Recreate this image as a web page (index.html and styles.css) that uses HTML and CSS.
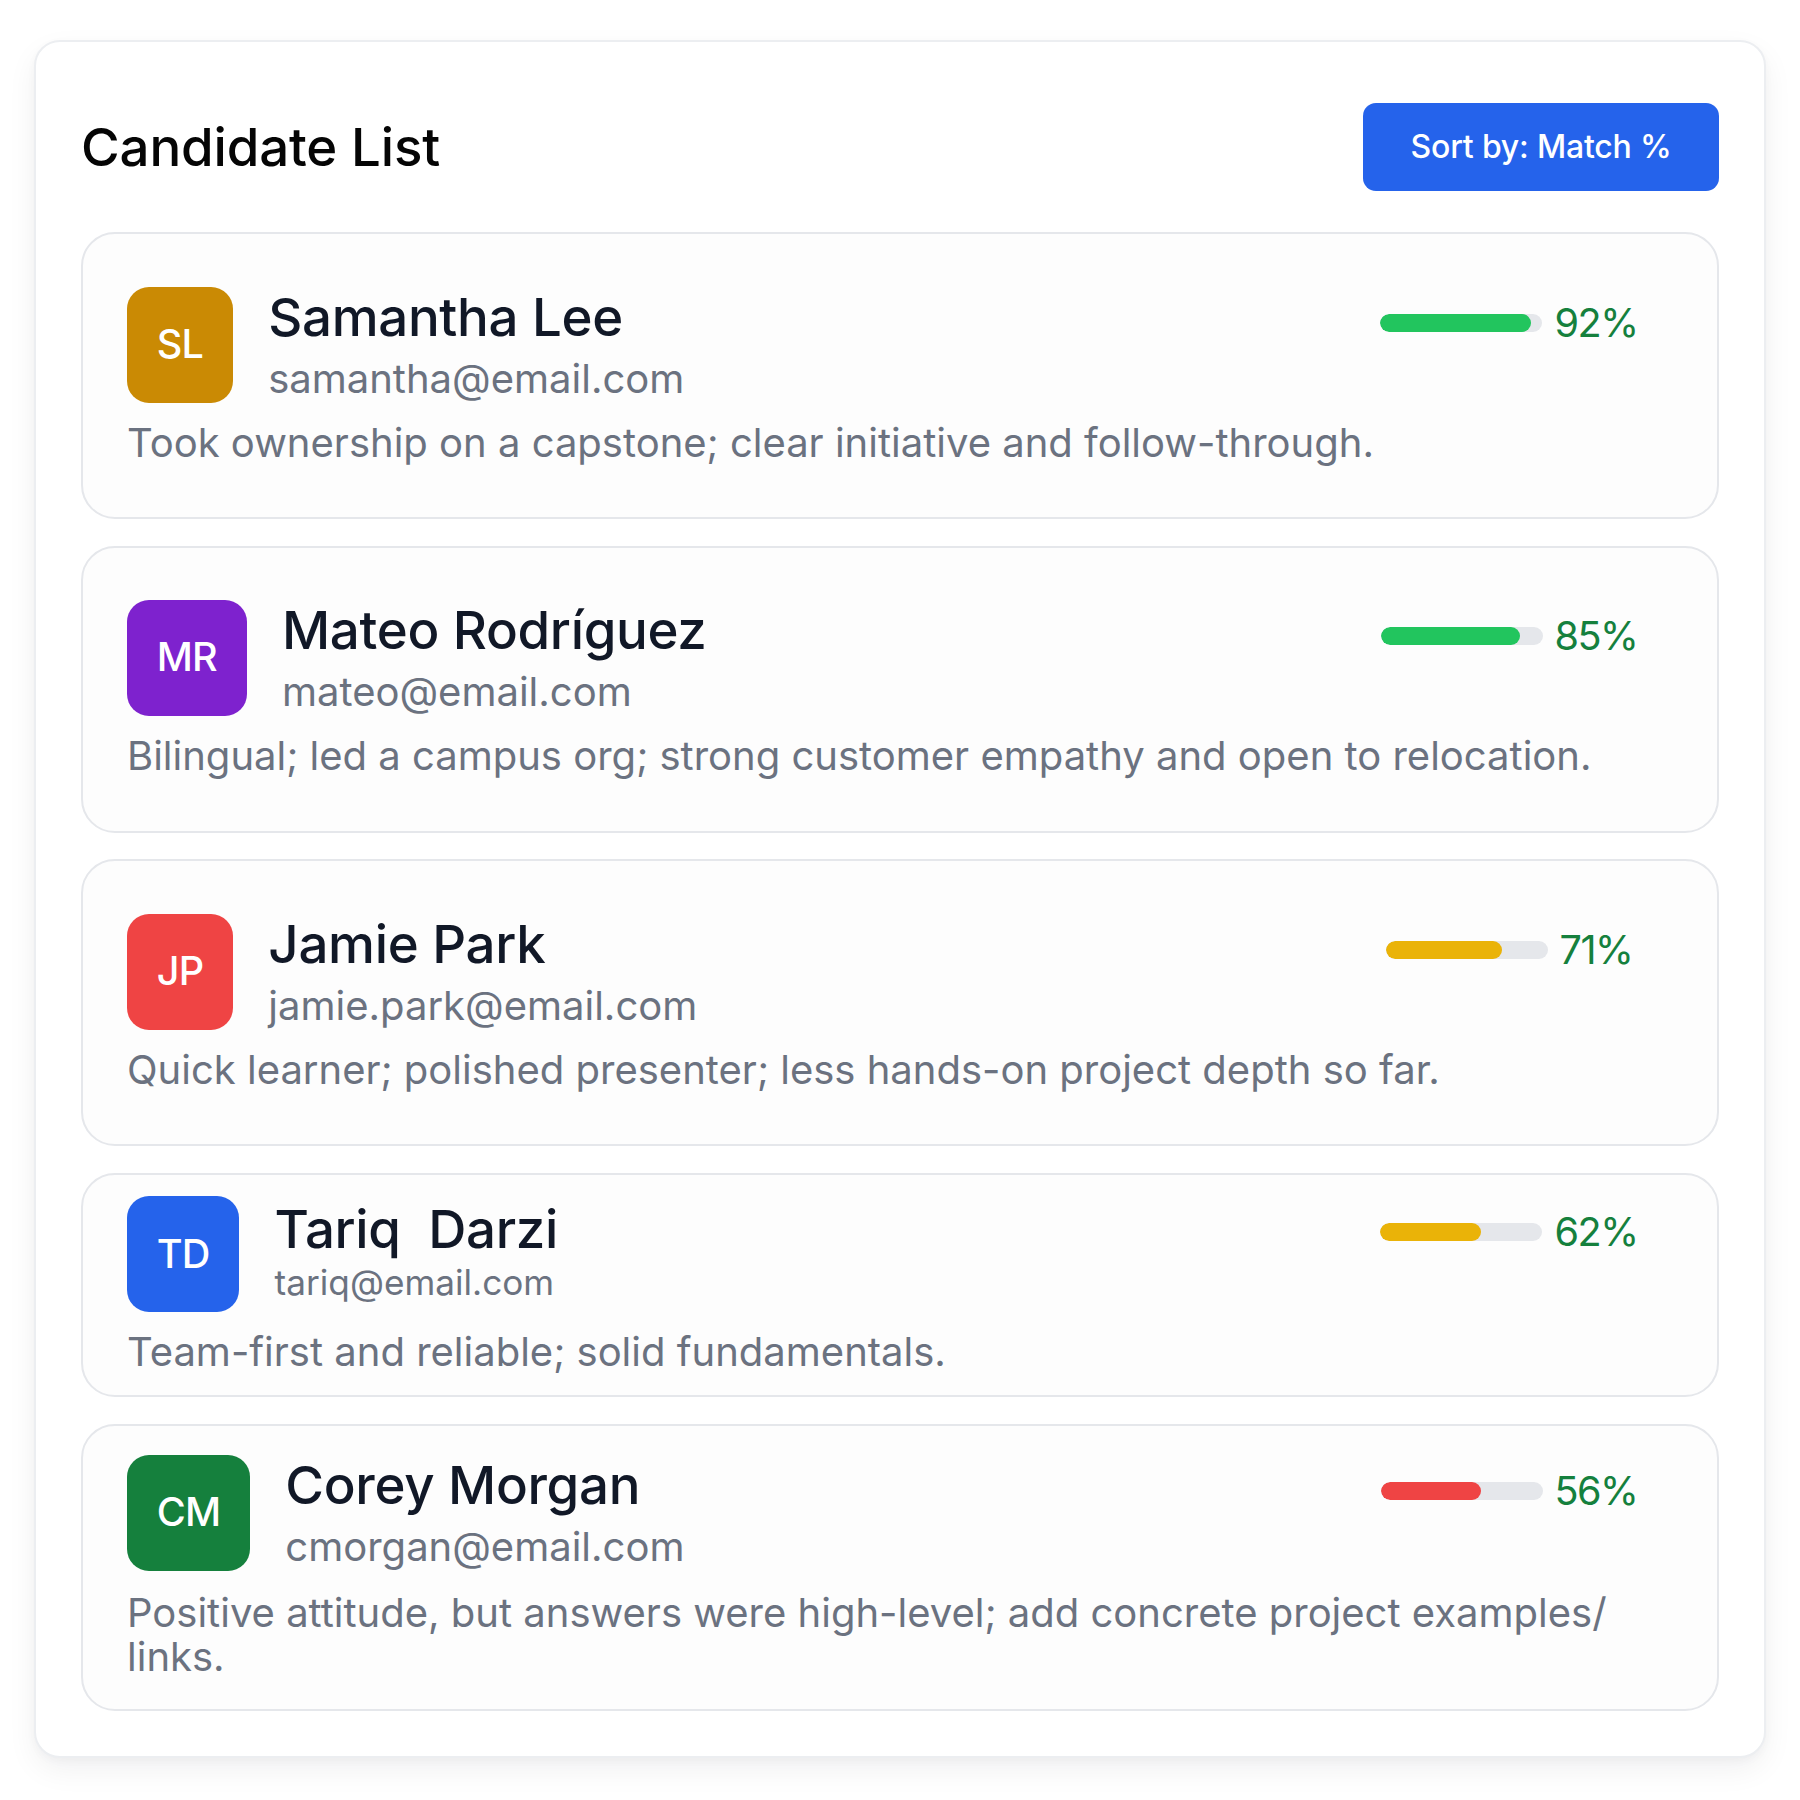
FILE: index.html
```html
<!DOCTYPE html>
<html lang="en">
<head>
<meta charset="utf-8">
<title>Candidate List</title>
<link rel="stylesheet" href="styles.css">
</head>
<body>
<div class="page">
  <section class="panel">
    <header class="panel-header">
      <h1 class="panel-title">Candidate List</h1>
      <button class="sort-btn" type="button">Sort by: Match %</button>
    </header>
    <ul class="candidates">
      <li class="card">
        <div class="card-top">
          <div class="avatar avatar--amber">SL</div>
          <div class="info">
            <div class="name">Samantha Lee</div>
            <div class="email">samantha@email.com</div>
          </div>
          <div class="match">
            <div class="bar"><div class="bar-fill bar-fill--green" style="width:93%"></div></div>
            <span class="pct">92%</span>
          </div>
        </div>
        <p class="note">Took ownership on a capstone; clear initiative and follow-through.</p>
      </li>
      <li class="card">
        <div class="card-top">
          <div class="avatar avatar--purple">MR</div>
          <div class="info">
            <div class="name">Mateo Rodríguez</div>
            <div class="email">mateo@email.com</div>
          </div>
          <div class="match">
            <div class="bar"><div class="bar-fill bar-fill--green" style="width:86%"></div></div>
            <span class="pct">85%</span>
          </div>
        </div>
        <p class="note">Bilingual; led a campus org; strong customer empathy and open to relocation.</p>
      </li>
      <li class="card">
        <div class="card-top">
          <div class="avatar avatar--red">JP</div>
          <div class="info">
            <div class="name">Jamie Park</div>
            <div class="email">jamie.park@email.com</div>
          </div>
          <div class="match">
            <div class="bar"><div class="bar-fill bar-fill--yellow" style="width:72%"></div></div>
            <span class="pct">71%</span>
          </div>
        </div>
        <p class="note">Quick learner; polished presenter; less hands-on project depth so far.</p>
      </li>
      <li class="card card--compact">
        <div class="card-top">
          <div class="avatar avatar--blue">TD</div>
          <div class="info">
            <div class="name">Tariq&nbsp; Darzi</div>
            <div class="email">tariq@email.com</div>
          </div>
          <div class="match">
            <div class="bar"><div class="bar-fill bar-fill--yellow" style="width:62%"></div></div>
            <span class="pct">62%</span>
          </div>
        </div>
        <p class="note">Team-first and reliable; solid fundamentals.</p>
      </li>
      <li class="card card--snug">
        <div class="card-top">
          <div class="avatar avatar--green">CM</div>
          <div class="info">
            <div class="name">Corey Morgan</div>
            <div class="email">cmorgan@email.com</div>
          </div>
          <div class="match">
            <div class="bar"><div class="bar-fill bar-fill--red" style="width:62%"></div></div>
            <span class="pct">56%</span>
          </div>
        </div>
        <p class="note">Positive attitude, but answers were high-level; add concrete project examples/<wbr>links.</p>
      </li>
    </ul>
  </section>
</div>
</body>
</html>
```

FILE: styles.css
```css
* {
  box-sizing: border-box;
}

html, body {
  margin: 0;
  padding: 0;
  background: #ffffff;
}

body {
  font-family: Inter, "Noto Sans", "Liberation Sans", sans-serif;
  color: #111827;
}

.page {
  padding: 40px 34px 40px 34px;
}

.panel {
  background: #ffffff;
  border: 2px solid #eceef1;
  border-radius: 26px;
  padding: 61px 45px 45px 45px;
  box-shadow: 0 12px 30px rgba(17, 24, 39, 0.06), 0 3px 8px rgba(17, 24, 39, 0.03);
}

.panel-header {
  display: flex;
  align-items: center;
  justify-content: space-between;
  height: 88px;
  margin-bottom: 41px;
}

.panel-title {
  margin: 0;
  font-size: 52.8px;
  line-height: 70.4px;
  font-weight: 500;
  letter-spacing: -0.15px;
  color: #050505;
}

.sort-btn {
  height: 88px;
  padding: 0 47.5px;
  border: none;
  border-radius: 13px;
  background: #2563eb;
  color: #ffffff;
  font-family: Inter, "Noto Sans", sans-serif;
  font-size: 32px;
  font-weight: 500;
  letter-spacing: -0.2px;
  line-height: 48px;
}

.candidates {
  list-style: none;
  margin: 0;
  padding: 0;
  display: flex;
  flex-direction: column;
  gap: 26.7px;
}

.card {
  background: #fdfdfd;
  border: 2px solid #e5e7eb;
  border-radius: 34px;
  padding: 52.5px 44px;
}

.card--compact {
  padding-top: 21.4px;
  padding-bottom: 21.4px;
}

.card--snug {
  padding-top: 29.3px;
  padding-bottom: 29.3px;
}

.card-top {
  display: flex;
  align-items: flex-start;
  gap: 35.2px;
}

.avatar {
  flex: none;
  height: 116px;
  padding: 0 29.8px;
  border-radius: 22px;
  display: flex;
  align-items: center;
  justify-content: center;
  color: #ffffff;
  font-size: 39.6px;
  font-weight: 500;
  letter-spacing: -0.8px;
  line-height: 1;
}

.avatar--amber { background: #ca8a04; }
.avatar--purple { background: #7e22ce; }
.avatar--red { background: #ef4444; }
.avatar--blue { background: #2563eb; }
.avatar--green { background: #15803d; }

.info {
  display: flex;
  flex-direction: column;
  min-width: 0;
}

.name {
  font-size: 52.8px;
  line-height: 60px;
  font-weight: 500;
  letter-spacing: -0.3px;
  color: #111827;
}

.email {
  margin-top: 4px;
  font-size: 40px;
  line-height: 56px;
  color: #6b7280;
}

.card--compact .name {
  line-height: 66px;
}

.card--compact .email {
  margin-top: 0;
  font-size: 35.2px;
  line-height: 40px;
}

.match {
  margin-left: auto;
  flex: none;
  width: 328px;
  height: 72px;
  display: flex;
  align-items: center;
  justify-content: center;
  gap: 12px;
}

.bar {
  width: 162px;
  height: 18px;
  border-radius: 9px;
  background: #e5e7eb;
  overflow: hidden;
}

.bar-fill {
  height: 100%;
  border-radius: 9px;
}

.bar-fill--green { background: #22c55e; }
.bar-fill--yellow { background: #eab308; }
.bar-fill--red { background: #ef4444; }

.pct {
  font-size: 39.6px;
  line-height: 72px;
  letter-spacing: -1.5px;
  color: #15803d;
}

.note {
  margin: 14px 0 0 0;
  font-size: 40px;
  line-height: 44px;
  color: #6b7280;
}

.card--compact .note {
  margin-top: 17.4px;
}

.card--snug .note {
  margin-top: 16px;
}
```
